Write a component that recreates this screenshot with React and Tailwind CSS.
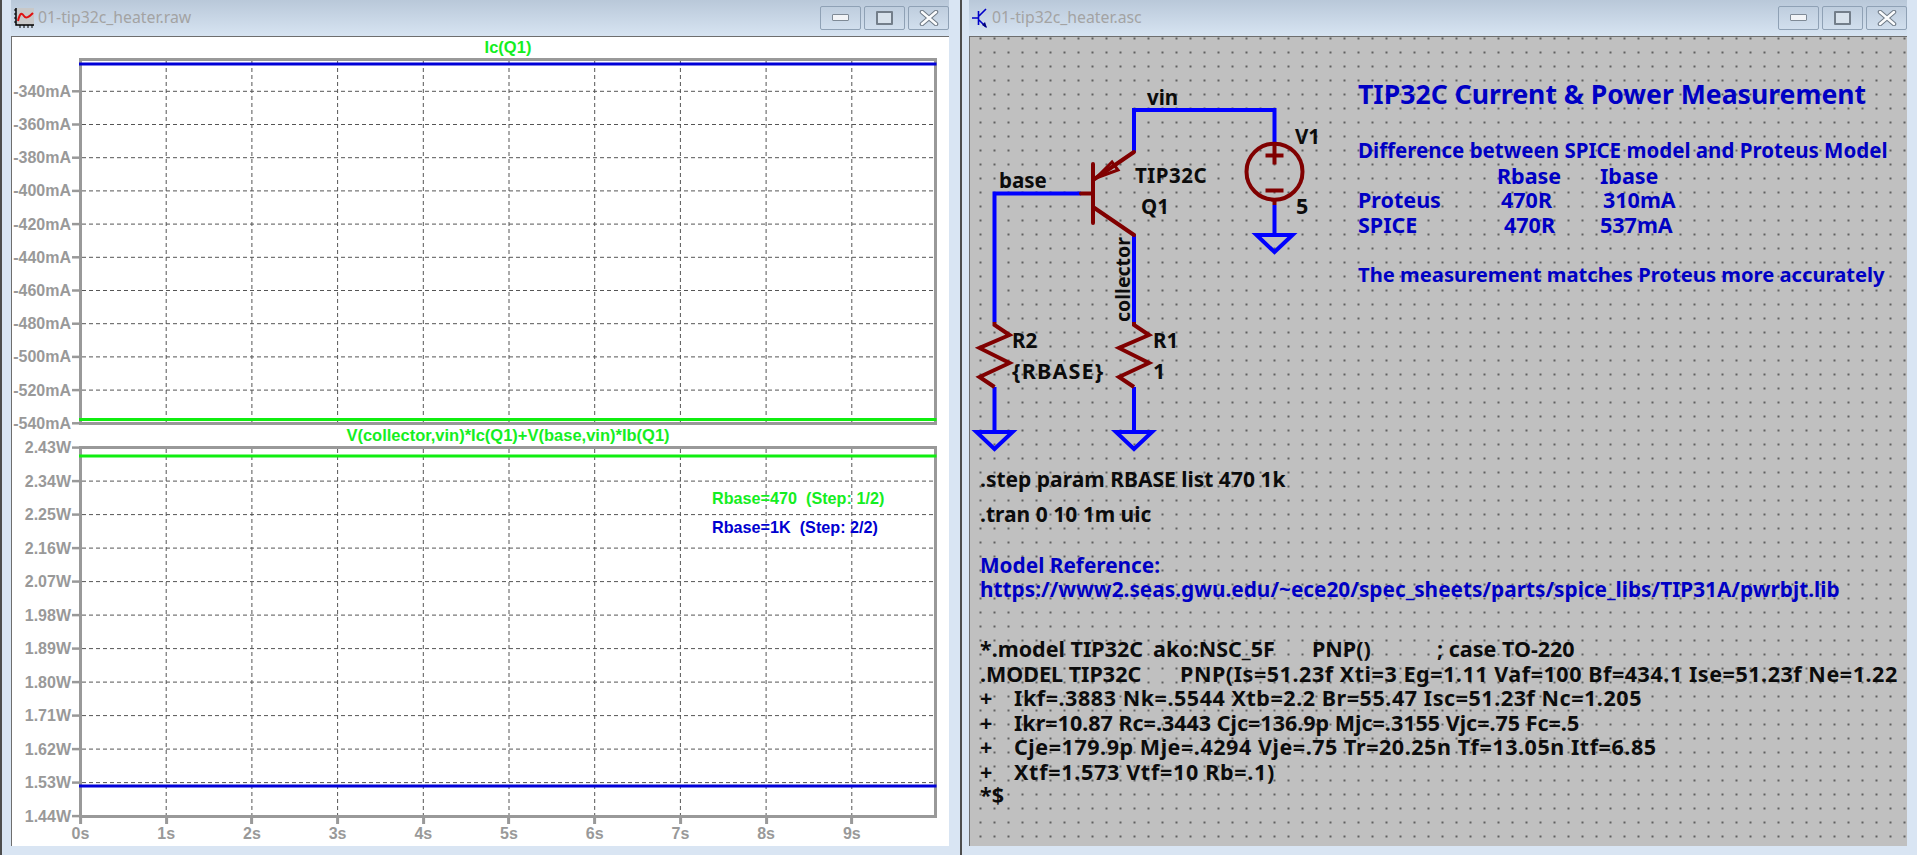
const BLUE = "#0000ff";
const RED = "#800000";
const gridX = [1, 2, 3, 4, 5, 6, 7, 8, 9];

const topLabels = ["-340mA", "-360mA", "-380mA", "-400mA", "-420mA", "-440mA", "-460mA", "-480mA", "-500mA", "-520mA", "-540mA"];
const bottomLabels = ["2.43W", "2.34W", "2.25W", "2.16W", "2.07W", "1.98W", "1.89W", "1.80W", "1.71W", "1.62W", "1.53W", "1.44W"];

// page y of each tick, x grid runs 85.7px apart from the left border
const topTicks = topLabels.map((l, i) => ({ l, y: 91.3 + 33.2 * i }));
const bottomTicks = bottomLabels.map((l, i) => ({ l, y: 447.6 + 33.5 * i }));

function WindowButtons() {
  return (
    <div className="flex gap-[3px]">
      <div className="flex h-[24px] w-[41px] items-center justify-center rounded-[2px] border border-[#8fa1b5]">
        <div className="h-[7px] w-[17px] rounded-[1px] border border-[#7f8a96] bg-[#f2f4f7]" />
      </div>
      <div className="flex h-[24px] w-[41px] items-center justify-center rounded-[2px] border border-[#8fa1b5]">
        <div className="h-[14px] w-[17px] rounded-[1px] border-2 border-[#737e8a] bg-[#d8e2ec]" />
      </div>
      <div className="flex h-[24px] w-[41px] items-center justify-center rounded-[2px] border border-[#8fa1b5]">
        <svg width="20" height="16" viewBox="0 0 20 16">
          <path d="M3 2 L17 14 M17 2 L3 14" stroke="#6f7a86" strokeWidth="4.5" strokeLinecap="round" />
          <path d="M3 2 L17 14 M17 2 L3 14" stroke="#fbfcfd" strokeWidth="2.5" strokeLinecap="round" />
        </svg>
      </div>
    </div>
  );
}

function TitleBar({ icon, title }) {
  return (
    <div className="flex h-[36px] items-center justify-between bg-gradient-to-b from-[#b9c8d9] to-[#d7e4f2] pb-[1px]">
      <div className="flex items-center gap-[4px] pl-[3px] font-['Noto_Sans',sans-serif] text-[15.8px] text-[#a3a3a3]">
        {icon}
        <span>{title}</span>
      </div>
      <WindowButtons />
    </div>
  );
}

function WaveIcon() {
  return (
    <svg width="20" height="20" viewBox="0 0 20 20">
      <rect x="3" y="0" width="17" height="17" fill="#c8c8c8" />
      <path d="M2 0 V17 H20" fill="none" stroke="#000" strokeWidth="1.5" />
      <path d="M0 2 H2 M0 6 H2 M0 10 H2 M0 14 H2 M6 17 V20 M10 17 V20 M14 17 V20 M18 17 V20" stroke="#000" strokeWidth="1" />
      <path d="M4 13 C6 4 8 5 10 8 C12 11 15 9 19 5" fill="none" stroke="#e01010" strokeWidth="2" />
    </svg>
  );
}

function TransistorIcon() {
  return (
    <svg width="16" height="20" viewBox="0 0 16 20">
      <path d="M0 10 H6 M6.5 3 V17 M7 8 L14 1 M7 12 L14 19" fill="none" stroke="#0000c8" strokeWidth="1.6" />
      <path d="M15 20 L10 17 L13 14 Z" fill="#000080" />
    </svg>
  );
}

function Plot({ ticks, top, height, title, traces, children }) {
  const innerW = 852;
  const innerH = height - 6;
  const originY = top + 3;
  return (
    <>
      <div className="ml-[67px] flex h-[21px] w-[858px] items-center justify-center font-['Liberation_Sans',sans-serif] text-[16.5px] font-bold text-[#14ee22]">
        {title}
      </div>
      <div className={`relative ml-[67px] w-[858px] border-[3px] border-[#999999] ${height === 367 ? "h-[367px]" : "h-[372px]"}`}>
        <svg
          className="absolute left-0 top-0 overflow-visible"
          width={innerW}
          height={innerH}
          viewBox={`82 ${originY} ${innerW} ${innerH}`}
        >
          {gridX.map((i) => (
            <line key={i} x1={80.5 + 85.7 * i} x2={80.5 + 85.7 * i} y1={originY} y2={originY + innerH} stroke="#555" strokeDasharray="4 3" />
          ))}
          {ticks.map((t) => (
            <g key={t.l}>
              <line x1="72" x2="80" y1={t.y} y2={t.y} stroke="#999" strokeWidth="2.5" />
              {t.y > originY + 2 && t.y < originY + innerH - 2 && (
                <line x1="82" x2="934" y1={t.y} y2={t.y} stroke="#555" strokeDasharray="4 3" />
              )}
            </g>
          ))}
          {traces.map((t) => (
            <line key={t.c} x1="79" x2="936.5" y1={t.y} y2={t.y} stroke={t.c} strokeWidth="3" />
          ))}
        </svg>
        {ticks.map((t) => (
          <span
            key={t.l}
            className="absolute right-[calc(100%+11px)] -translate-y-1/2 whitespace-nowrap font-['Liberation_Sans',sans-serif] text-[16px] font-bold leading-none text-[#999999]"
            style={{ top: t.y - originY + 0.5 }}
          >
            {t.l}
          </span>
        ))}
        {children}
      </div>
    </>
  );
}

function XAxis() {
  return (
    <div className="relative h-[27px] w-full">
      {[0, 1, 2, 3, 4, 5, 6, 7, 8, 9].map((i) => (
        <div key={i} className="absolute top-0 flex -translate-x-1/2 flex-col items-center" style={{ left: 68.5 + 85.7 * i }}>
          <div className="h-[6px] w-[3px] bg-[#999999]" />
          <span className="mt-[1px] font-['Liberation_Sans',sans-serif] text-[16px] font-bold leading-[18px] text-[#999999]">{i}s</span>
        </div>
      ))}
    </div>
  );
}

// x is the page x of the first glyph, b its baseline, s the font size
const ink = "text-[#0c0c0c]";
const note = "text-[#0000c4]";
const notes = [
  { t: "TIP32C Current & Power Measurement", x: 1358, b: 105, s: 26.6, c: `text-[26.6px] ${note}` },
  { t: "Difference between SPICE model and Proteus Model", x: 1358, b: 158, s: 20.5, c: `text-[20.5px] ${note}` },
  { t: "Rbase", x: 1497, b: 184, s: 21.5, c: `text-[21.5px] ${note}` },
  { t: "Ibase", x: 1600, b: 184, s: 21.5, c: `text-[21.5px] ${note}` },
  { t: "Proteus", x: 1358, b: 208, s: 21.5, c: `text-[21.5px] ${note}` },
  { t: "470R", x: 1501, b: 208, s: 21.5, c: `text-[21.5px] ${note}` },
  { t: "310mA", x: 1603, b: 208, s: 21.5, c: `text-[21.5px] ${note}` },
  { t: "SPICE", x: 1358, b: 233, s: 21.5, c: `text-[21.5px] ${note}` },
  { t: "470R", x: 1504, b: 233, s: 21.5, c: `text-[21.5px] ${note}` },
  { t: "537mA", x: 1600, b: 233, s: 21.5, c: `text-[21.5px] ${note}` },
  { t: "The measurement matches Proteus more accurately", x: 1358, b: 282, s: 20.2, c: `text-[20.2px] ${note}` },
  { t: ".step param RBASE list 470 1k", x: 980, b: 488, s: 21, c: `text-[21px] ${ink}` },
  { t: ".tran 0 10 1m uic", x: 980, b: 523, s: 21, c: `text-[21px] ${ink}` },
  { t: "Model Reference:", x: 980, b: 573, s: 20.8, c: `text-[20.8px] ${note}` },
  { t: "https://www2.seas.gwu.edu/~ece20/spec_sheets/parts/spice_libs/TIP31A/pwrbjt.lib", x: 980, b: 597, s: 20.8, c: `text-[20.8px] ${note}` },
  { t: "*.model TIP32C", x: 980, b: 657, s: 21.5, c: `text-[21.5px] ${ink}` },
  { t: "ako:NSC_5F", x: 1153, b: 657, s: 21.5, c: `text-[21.5px] ${ink}` },
  { t: "PNP()", x: 1312, b: 657, s: 21.5, c: `text-[21.5px] ${ink}` },
  { t: "; case TO-220", x: 1437, b: 657, s: 21.5, c: `text-[21.5px] ${ink}` },
  { t: ".MODEL TIP32C", x: 980, b: 682, s: 21.5, c: `text-[21.5px] ${ink}` },
  { t: "PNP(Is=51.23f Xti=3 Eg=1.11 Vaf=100 Bf=434.1 Ise=51.23f Ne=1.22", x: 1180, b: 682, s: 21.5, c: `text-[21.5px] tracking-[0.55px] ${ink}` },
  { t: "+", x: 980, b: 706, s: 21.5, c: `text-[21.5px] ${ink}` },
  { t: "Ikf=.3883 Nk=.5544 Xtb=2.2 Br=55.47 Isc=51.23f Nc=1.205", x: 1014, b: 706, s: 21.5, c: `text-[21.5px] tracking-[0.55px] ${ink}` },
  { t: "+", x: 980, b: 731, s: 21.5, c: `text-[21.5px] ${ink}` },
  { t: "Ikr=10.87 Rc=.3443 Cjc=136.9p Mjc=.3155 Vjc=.75 Fc=.5", x: 1014, b: 731, s: 21.5, c: `text-[21.5px] ${ink}` },
  { t: "+", x: 980, b: 755, s: 21.5, c: `text-[21.5px] ${ink}` },
  { t: "Cje=179.9p Mje=.4294 Vje=.75 Tr=20.25n Tf=13.05n Itf=6.85", x: 1014, b: 755, s: 21.5, c: `text-[21.5px] tracking-[0.55px] ${ink}` },
  { t: "+", x: 980, b: 780, s: 21.5, c: `text-[21.5px] ${ink}` },
  { t: "Xtf=1.573 Vtf=10 Rb=.1)", x: 1014, b: 780, s: 21.5, c: `text-[21.5px] tracking-[0.7px] ${ink}` },
  { t: "*$", x: 980, b: 803, s: 21.5, c: `text-[21.5px] ${ink}` },
  { t: "vin", x: 1147, b: 105, s: 20.5, c: `text-[20.5px] ${ink}` },
  { t: "base", x: 999, b: 188, s: 20.5, c: `text-[20.5px] ${ink}` },
  { t: "TIP32C", x: 1135, b: 183, s: 20.5, c: `text-[20.5px] tracking-[0.5px] ${ink}` },
  { t: "Q1", x: 1141, b: 214, s: 20.5, c: `text-[20.5px] ${ink}` },
  { t: "V1", x: 1295, b: 144, s: 20.5, c: `text-[20.5px] ${ink}` },
  { t: "5", x: 1296, b: 214, s: 21.5, c: `text-[21.5px] ${ink}` },
  { t: "R2", x: 1012, b: 348, s: 20.5, c: `text-[20.5px] ${ink}` },
  { t: "{RBASE}", x: 1012, b: 379, s: 21.5, c: `text-[21.5px] tracking-[1.2px] ${ink}` },
  { t: "R1", x: 1153, b: 348, s: 20.5, c: `text-[20.5px] ${ink}` },
  { t: "1", x: 1153, b: 379, s: 21.5, c: `text-[21.5px] ${ink}` },
];

function Ground({ x, y }) {
  return <path d={`M${x - 18} ${y} H${x + 18} L${x} ${y + 17} Z`} fill="none" stroke={BLUE} strokeWidth="4" />;
}

function Resistor({ x }) {
  return (
    <polyline
      points={`${x},322 ${x},325 ${x + 15},335 ${x - 15},348 ${x + 15},363 ${x - 15},377 ${x},387`}
      fill="none"
      stroke={RED}
      strokeWidth="4"
    />
  );
}

function Schematic() {
  return (
    <svg className="absolute left-0 top-0" width="937" height="809" viewBox="970 37 937 809">
      <path d="M1134 152 V110 H1274.5 V142" fill="none" stroke={BLUE} strokeWidth="4" />
      <path d="M1081 193.5 H994.5 V322" fill="none" stroke={BLUE} strokeWidth="4" />
      <path d="M1134 235 V322" fill="none" stroke={BLUE} strokeWidth="4" />
      <path d="M994.5 387 V432 M1134 387 V432 M1274.5 205 V235" fill="none" stroke={BLUE} strokeWidth="4" />
      <Ground x={994.5} y={432} />
      <Ground x={1134} y={432} />
      <Ground x={1274.5} y={235} />
      <Resistor x={994.5} />
      <Resistor x={1134} />
      <circle cx="1274.5" cy="171.7" r="28" fill="none" stroke={RED} strokeWidth="4" />
      <path d="M1265.5 155.5 H1283.5 M1274.5 146.5 V164.5 M1265.5 190.5 H1283.5 M1274.5 142 V147 M1274.5 199 V205" stroke={RED} strokeWidth="4" />
      <path d="M1081 193.5 H1093 M1093 164 V223 M1093 180 L1134 152 M1093 207 L1134 235" fill="none" stroke={RED} strokeWidth="4" strokeLinecap="round" />
      <path d="M1096 178 L1112 162 L1118 170 Z" fill="none" stroke={RED} strokeWidth="3" />
    </svg>
  );
}

export default function App() {
  return (
    <div className="flex h-[855px] w-[1917px] overflow-hidden bg-[#d9e5f3]">
      {/* waveform viewer */}
      <div className="flex h-full w-[960px] flex-col border-l-[2px] border-[#4d4d4d] pl-[9px] pr-[11px]">
        <TitleBar icon={<WaveIcon />} title="01-tip32c_heater.raw" />
        <div className="h-[810px] border-l border-t border-[#6e6e6e] bg-white">
          <Plot
            ticks={topTicks}
            top={58}
            height={367}
            title="Ic(Q1)"
            traces={[
              { c: "#0000d8", y: 64 },
              { c: "#10ee10", y: 419.5 },
            ]}
          />
          <Plot
            ticks={bottomTicks}
            top={446}
            height={372}
            title="V(collector,vin)*Ic(Q1)+V(base,vin)*Ib(Q1)"
            traces={[
              { c: "#10ee10", y: 456 },
              { c: "#0000d8", y: 786 },
            ]}
          >
            <span className="absolute left-[630px] top-[41px] whitespace-pre font-['Liberation_Sans',sans-serif] text-[16.2px] font-bold leading-none text-[#14ee22]">
              {"Rbase=470  (Step: 1/2)"}
            </span>
            <span className="absolute left-[630px] top-[70px] whitespace-pre font-['Liberation_Sans',sans-serif] text-[16.2px] font-bold leading-none text-[#0000d0]">
              {"Rbase=1K  (Step: 2/2)"}
            </span>
          </Plot>
          <XAxis />
        </div>
      </div>

      {/* schematic editor */}
      <div className="flex h-full w-[957px] flex-col border-l-[2px] border-[#4d4d4d] pl-[7px] pr-[10px]">
        <TitleBar icon={<TransistorIcon />} title="01-tip32c_heater.asc" />
        <div className="relative h-[810px] overflow-hidden border-l border-t border-[#6e6e6e] bg-[#c0c0c0] bg-[radial-gradient(circle,#2a2a2a_0.6px,transparent_0.9px)] bg-[size:14px_14px] bg-[position:3.5px_-5.5px]">
          <Schematic />
          {notes.map((n) => (
            <span
              key={n.t + n.x + n.b}
              className={`absolute whitespace-pre font-['Noto_Sans',sans-serif] font-bold leading-none ${n.c}`}
              style={{ left: n.x - 970, top: n.b - 37 - n.s * 0.888 }}
            >
              {n.t}
            </span>
          ))}
          <span className="absolute bottom-[524px] left-[143px] rotate-180 font-['Noto_Sans',sans-serif] text-[19.5px] font-bold leading-none text-[#0c0c0c] [writing-mode:vertical-rl]">
            collector
          </span>
        </div>
      </div>
    </div>
  );
}
